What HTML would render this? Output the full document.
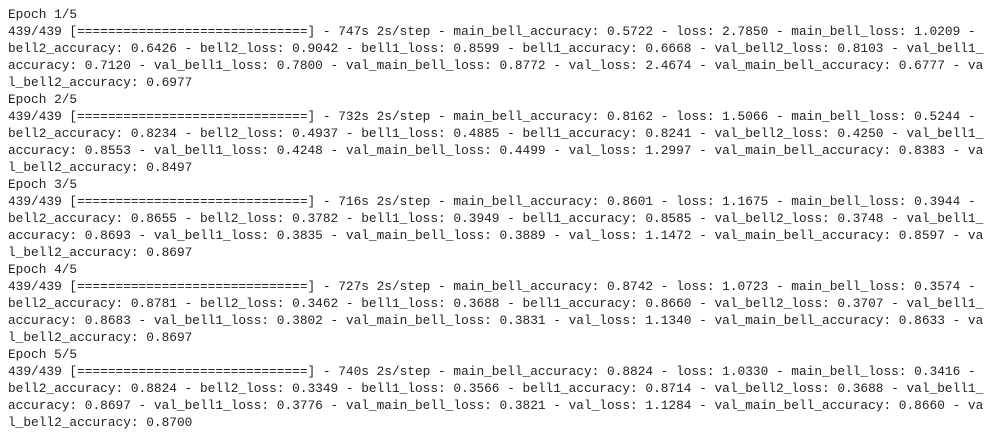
<!DOCTYPE html>
<html><head><meta charset="utf-8"><style>
html,body{margin:0;padding:0;background:#fff;width:994px;height:436px;overflow:hidden}
pre{margin:0;padding:5.5px 0 0 8px;font-family:"Liberation Mono",monospace;font-size:12.8px;line-height:17px;color:#222;white-space:pre}
</style></head><body><pre>Epoch 1/5
439/439 [==============================] - 747s 2s/step - main_bell_accuracy: 0.5722 - loss: 2.7850 - main_bell_loss: 1.0209 -
bell2_accuracy: 0.6426 - bell2_loss: 0.9042 - bell1_loss: 0.8599 - bell1_accuracy: 0.6668 - val_bell2_loss: 0.8103 - val_bell1_
accuracy: 0.7120 - val_bell1_loss: 0.7800 - val_main_bell_loss: 0.8772 - val_loss: 2.4674 - val_main_bell_accuracy: 0.6777 - va
l_bell2_accuracy: 0.6977
Epoch 2/5
439/439 [==============================] - 732s 2s/step - main_bell_accuracy: 0.8162 - loss: 1.5066 - main_bell_loss: 0.5244 -
bell2_accuracy: 0.8234 - bell2_loss: 0.4937 - bell1_loss: 0.4885 - bell1_accuracy: 0.8241 - val_bell2_loss: 0.4250 - val_bell1_
accuracy: 0.8553 - val_bell1_loss: 0.4248 - val_main_bell_loss: 0.4499 - val_loss: 1.2997 - val_main_bell_accuracy: 0.8383 - va
l_bell2_accuracy: 0.8497
Epoch 3/5
439/439 [==============================] - 716s 2s/step - main_bell_accuracy: 0.8601 - loss: 1.1675 - main_bell_loss: 0.3944 -
bell2_accuracy: 0.8655 - bell2_loss: 0.3782 - bell1_loss: 0.3949 - bell1_accuracy: 0.8585 - val_bell2_loss: 0.3748 - val_bell1_
accuracy: 0.8693 - val_bell1_loss: 0.3835 - val_main_bell_loss: 0.3889 - val_loss: 1.1472 - val_main_bell_accuracy: 0.8597 - va
l_bell2_accuracy: 0.8697
Epoch 4/5
439/439 [==============================] - 727s 2s/step - main_bell_accuracy: 0.8742 - loss: 1.0723 - main_bell_loss: 0.3574 -
bell2_accuracy: 0.8781 - bell2_loss: 0.3462 - bell1_loss: 0.3688 - bell1_accuracy: 0.8660 - val_bell2_loss: 0.3707 - val_bell1_
accuracy: 0.8683 - val_bell1_loss: 0.3802 - val_main_bell_loss: 0.3831 - val_loss: 1.1340 - val_main_bell_accuracy: 0.8633 - va
l_bell2_accuracy: 0.8697
Epoch 5/5
439/439 [==============================] - 740s 2s/step - main_bell_accuracy: 0.8824 - loss: 1.0330 - main_bell_loss: 0.3416 -
bell2_accuracy: 0.8824 - bell2_loss: 0.3349 - bell1_loss: 0.3566 - bell1_accuracy: 0.8714 - val_bell2_loss: 0.3688 - val_bell1_
accuracy: 0.8697 - val_bell1_loss: 0.3776 - val_main_bell_loss: 0.3821 - val_loss: 1.1284 - val_main_bell_accuracy: 0.8660 - va
l_bell2_accuracy: 0.8700</pre></body></html>
